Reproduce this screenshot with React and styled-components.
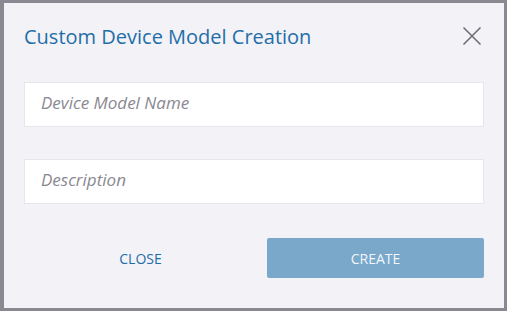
import React from 'react';
import styled, { createGlobalStyle } from 'styled-components';

const GlobalStyle = createGlobalStyle`
  html, body {
    margin: 0;
    padding: 0;
    background: #8a8891;
    overflow: hidden;
  }
  body {
    font-family: "Open Sans", "Liberation Sans", sans-serif;
  }
`;

const Page = styled.div`
  width: 507px;
  height: 311px;
  padding: 3px 3px 0 4px;
  box-sizing: border-box;
  overflow: hidden;
`;

const Dialog = styled.div`
  position: relative;
  z-index: 1;
  width: 500px;
  height: 305px;
  background: #f2f2f7;
  box-sizing: border-box;
  padding: 18px 20px 0 20px;
`;

const Header = styled.div`
  display: flex;
  align-items: center;
  justify-content: space-between;
  height: 30px;
  margin-bottom: 31px;
`;

const Title = styled.h2`
  margin: 0;
  font-size: 20px;
  font-weight: 400;
  color: #1f6ea8;
`;

const CloseIcon = styled.button`
  border: 0;
  background: none;
  padding: 0;
  margin: 0 2px 0 0;
  width: 20px;
  height: 20px;
  cursor: pointer;
  display: flex;
`;

const Field = styled.input`
  display: block;
  width: 460px;
  height: 45px;
  box-sizing: border-box;
  border: 1px solid #e6e6ec;
  background: #fff;
  padding: 0 16px 5px;
  margin-bottom: ${props => props.gap || 0}px;
  font-family: inherit;
  font-size: 17px;
  outline: 0;

  &::placeholder {
    font-style: italic;
    color: #8a8891;
  }
`;

const Actions = styled.div`
  display: grid;
  grid-template-columns: 233px 217px;
  column-gap: 10px;
  margin-top: 34px;
`;

const Button = styled.button`
  height: 40px;
  border: 0;
  border-radius: 2px;
  font-family: inherit;
  font-size: 14px;
  text-transform: uppercase;
  cursor: pointer;
  padding: 0;
  background: ${props => (props.primary ? '#79a8cb' : 'transparent')};
  color: ${props => (props.primary ? '#f2f6fa' : '#1f6ea8')};
`;

const Behind = styled.div`
  margin: 1px 0 0 42px;
  font-size: 15px;
  color: #55535c;
  line-height: 20px;
`;

export default function App() {
  return (
    <>
      <GlobalStyle />
      <Page>
        <Dialog>
          <Header>
            <Title>Custom Device Model Creation</Title>
            <CloseIcon aria-label="close">
              <svg width="20" height="20" viewBox="0 0 20 20">
                <path d="M1.5 1.5 L18.5 18.5 M18.5 1.5 L1.5 18.5" stroke="#6f6d76" strokeWidth="1.6" fill="none" />
              </svg>
            </CloseIcon>
          </Header>
          <Field placeholder="Device Model Name" gap={32} />
          <Field placeholder="Description" />
          <Actions>
            <Button>Close</Button>
            <Button primary>Create</Button>
          </Actions>
        </Dialog>
        <Behind>Edit Password</Behind>
      </Page>
    </>
  );
}
